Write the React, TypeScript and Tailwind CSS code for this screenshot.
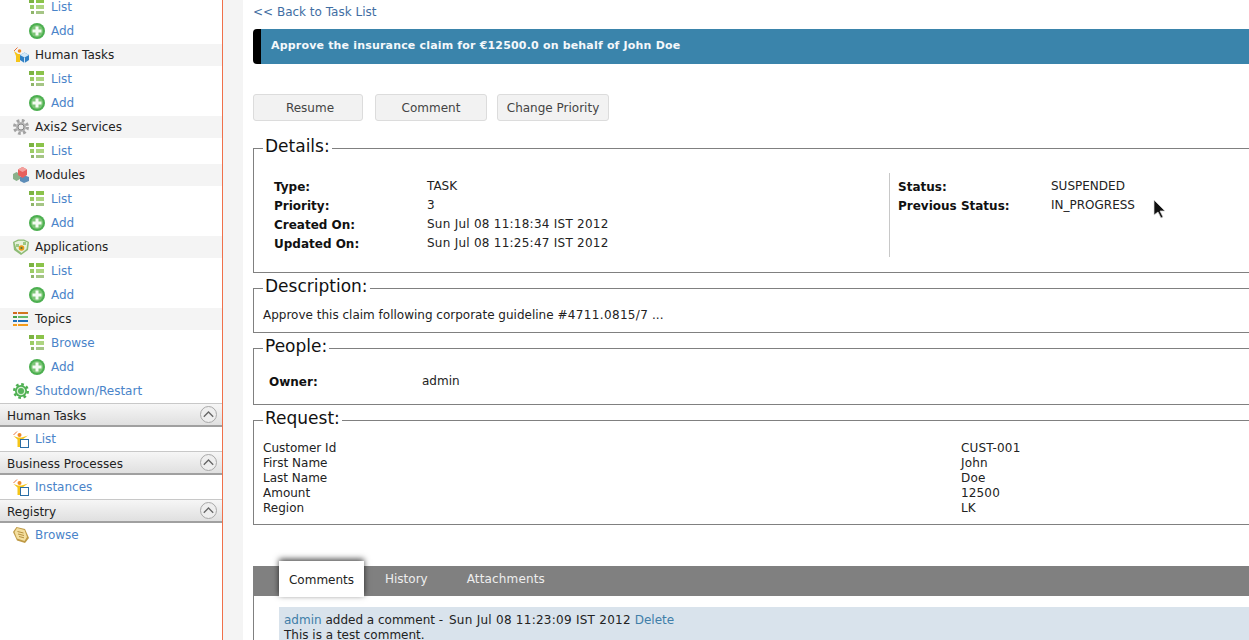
import type { ReactNode } from "react";

const font = { fontFamily: '"DejaVu Sans", sans-serif' };

function ListIcon() {
  return (
    <svg width="16" height="16" viewBox="0 0 16 16" className="shrink-0">
      <rect x="0" y="0" width="5" height="4" fill="#7cb342" />
      <rect x="7" y="0" width="8" height="4" fill="#8bc34a" />
      <rect x="1" y="6" width="4" height="4" fill="#9ccc65" />
      <rect x="7" y="6" width="8" height="4" fill="#aed581" />
      <rect x="2" y="12" width="3" height="3" fill="#8fb56a" />
      <rect x="7" y="12" width="8" height="3" fill="#a5c585" />
    </svg>
  );
}

function AddIcon() {
  return (
    <svg width="16" height="16" viewBox="0 0 16 16" className="shrink-0">
      <circle cx="8" cy="8" r="8" fill="#4caf50" />
      <circle cx="8" cy="8" r="6" fill="#7cc576" />
      <path d="M6.5 3.5h3v3h3v3h-3v3h-3v-3h-3v-3h3z" fill="#f4fbf2" />
    </svg>
  );
}

function HumanTaskIcon() {
  return (
    <svg width="16" height="16" viewBox="0 0 16 16" className="shrink-0">
      <path d="M1 4 4.500 0.500" stroke="#e8743b" fill="none" />
      <path d="M1 4l4 3 2 0v8H3V9z" fill="#f5c518" />
      <circle cx="6.500" cy="4" r="1.800" fill="#f08a24" />
      <path d="M7 8l4.500-2.500L16 8v5l-4.500 3L7 13z" fill="#2f7fc4" />
      <path d="M7 8l4.500 2.500L16 8l-4.500-2.500z" fill="#d5e9f8" />
      <path d="M11.500 10.500V16" stroke="#cfe4f5" />
    </svg>
  );
}

function GearIcon() {
  return (
    <svg width="16" height="16" viewBox="0 0 16 16" className="shrink-0">
      <circle cx="8" cy="8" r="6.300" fill="none" stroke="#a2a2a2" strokeWidth="3.400" strokeDasharray="2.600 2.350" />
      <circle cx="8" cy="8" r="5" fill="#b5b5b5" />
      <circle cx="8" cy="8" r="3" fill="#ececec" stroke="#858585" />
    </svg>
  );
}

function ModulesIcon() {
  return (
    <svg width="16" height="16" viewBox="0 0 16 16" className="shrink-0">
      <path d="M0 7l3.500-2L7 7v5l-3.500 2L0 12z" fill="#8ab08a" />
      <path d="M7 10l3.500-2 5.500 2v4l-5 2-4-2z" fill="#5d8db8" />
      <path d="M5 2.500 9.500 0 14 2.500V8l-4.500 3L5 8z" fill="#e8605c" />
      <path d="M5 2.500 9.500 5 14 2.500 9.500 0z" fill="#f3a19e" />
    </svg>
  );
}

function AppIcon() {
  return (
    <svg width="16" height="16" viewBox="0 0 16 16" className="shrink-0">
      <path d="M0 3l5-2.500h6L16 3l-1 8-7 5-7-5z" fill="#8dbb74" />
      <path d="M1.500 3.500l4-1.800 5 0 4 1.800-1 6.500-5 4-5-4z" fill="#e6f1dc" />
      <path d="M3 5h3v3H3zM10 3h3v3h-3z" fill="#9cc883" />
      <circle cx="8.500" cy="9" r="2.800" fill="#e69a1e" />
      <circle cx="8.500" cy="9" r="1.100" fill="#4f7a36" />
    </svg>
  );
}

function TopicsIcon() {
  return (
    <svg width="16" height="16" viewBox="0 0 16 16" className="shrink-0">
      <rect x="0" y="1" width="4" height="2" fill="#d2691e" />
      <rect x="5" y="1" width="10" height="2" fill="#d2761e" />
      <rect x="0" y="5" width="4" height="2" fill="#43a047" />
      <rect x="5" y="5" width="10" height="2" fill="#66bb6a" />
      <rect x="0" y="9" width="4" height="2" fill="#1e6fb8" />
      <rect x="5" y="9" width="10" height="2" fill="#1e6fb8" />
      <rect x="0" y="13" width="4" height="2" fill="#f59c1a" />
      <rect x="5" y="13" width="10" height="2" fill="#f59c1a" />
    </svg>
  );
}

function ShutdownIcon() {
  return (
    <svg width="16" height="16" viewBox="0 0 16 16" className="shrink-0">
      <circle cx="8" cy="8" r="6.800" fill="none" stroke="#4caf50" strokeWidth="2.400" strokeDasharray="2.670 2.670" />
      <circle cx="8" cy="8" r="6" fill="#4caf50" />
      <circle cx="8" cy="8" r="4.300" fill="#d7efd3" />
      <circle cx="8" cy="8" r="3" fill="#56b45a" />
    </svg>
  );
}

function InstanceIcon() {
  return (
    <svg width="16" height="17" viewBox="0 0 16 17" className="shrink-0">
      <path d="M0.500 4 4 0.500" stroke="#e8743b" fill="none" />
      <path d="M0.500 5 4.500 8.500V16H8V9.500L15 4.500 8.500 6.500H5z" fill="#f5c518" />
      <circle cx="6.500" cy="4" r="2" fill="#f08a24" />
      <rect x="7.500" y="8.500" width="8" height="8" fill="#fff" stroke="#2a6ea6" />
    </svg>
  );
}

function BrowseIcon() {
  return (
    <svg width="16" height="16" viewBox="0 0 16 16" className="shrink-0">
      <path d="M3.500 0 12 2l4 9-4 5-8-2.500L0 5z" fill="#bf9a45" />
      <path d="M4 1l7.500 2 2.500 7-2.500 4L4 11.500 1.500 5z" fill="#f4df9f" />
      <path d="M4.500 4.500l6 1.500M5 7l6 1.500M6 9.500l5 1.300" stroke="#b79140" />
    </svg>
  );
}

function Chevron() {
  return (
    <svg width="17" height="17" viewBox="0 0 17 17" className="shrink-0">
      <circle cx="8.500" cy="8.500" r="8" fill="#eeeeee" stroke="#a8a8a8" />
      <path d="M3.800 10.800 8.500 6l4.700 4.800" fill="none" stroke="#666" strokeWidth="1.300" />
    </svg>
  );
}

function SubLink({ icon, label }: { icon: ReactNode; label: string }) {
  return (
    <div className="flex h-6 items-center gap-[6px] pl-[29px] text-[#4a84c9]">
      {icon}
      <span>{label}</span>
    </div>
  );
}

function Group({ icon, label }: { icon: ReactNode; label: string }) {
  return (
    <div className="my-px flex h-[22px] items-center gap-[6px] bg-[#f4f4f4] pl-[13px] text-[#222]">
      {icon}
      <span>{label}</span>
    </div>
  );
}

function SectionHead({ label }: { label: string }) {
  return (
    <div className="flex h-6 items-center justify-between border-t border-b-2 border-t-[#c8c8c8] border-b-[#a0a0a0] bg-gradient-to-b from-[#f6f6f6] to-[#e0e0e0] pr-[5px] pl-[7px] text-[#222]">
      <span className="pt-[2px]">{label}</span>
      <Chevron />
    </div>
  );
}

function TopLink({ icon, label }: { icon: ReactNode; label: string }) {
  return (
    <div className="flex h-6 items-center gap-[6px] pl-[13px] text-[#4a84c9]">
      {icon}
      <span>{label}</span>
    </div>
  );
}

function Sidebar() {
  return (
    <div className="-mt-[5px] w-[223px] shrink-0 border-r border-[#f0704a] bg-white">
      <SubLink icon={<ListIcon />} label="List" />
      <SubLink icon={<AddIcon />} label="Add" />
      <Group icon={<HumanTaskIcon />} label="Human Tasks" />
      <SubLink icon={<ListIcon />} label="List" />
      <SubLink icon={<AddIcon />} label="Add" />
      <Group icon={<GearIcon />} label="Axis2 Services" />
      <SubLink icon={<ListIcon />} label="List" />
      <Group icon={<ModulesIcon />} label="Modules" />
      <SubLink icon={<ListIcon />} label="List" />
      <SubLink icon={<AddIcon />} label="Add" />
      <Group icon={<AppIcon />} label="Applications" />
      <SubLink icon={<ListIcon />} label="List" />
      <SubLink icon={<AddIcon />} label="Add" />
      <Group icon={<TopicsIcon />} label="Topics" />
      <SubLink icon={<ListIcon />} label="Browse" />
      <SubLink icon={<AddIcon />} label="Add" />
      <TopLink icon={<ShutdownIcon />} label="Shutdown/Restart" />
      <SectionHead label="Human Tasks" />
      <TopLink icon={<InstanceIcon />} label="List" />
      <SectionHead label="Business Processes" />
      <TopLink icon={<InstanceIcon />} label="Instances" />
      <SectionHead label="Registry" />
      <TopLink icon={<BrowseIcon />} label="Browse" />
    </div>
  );
}

function Box({ title, className, children }: { title: string; className: string; children: ReactNode }) {
  return (
    <fieldset className={`min-w-0 border border-[#808080] ${className}`}>
      <legend className="ml-[9px] px-[2px] pb-[4px] text-[17px] leading-[18px] text-[#111]">{title}</legend>
      {children}
    </fieldset>
  );
}

function Field({ label, value, date }: { label: string; value: string; date?: boolean }) {
  return (
    <div className="flex h-[19px] items-center">
      <span className="w-[153px] font-bold text-[#111]">{label}</span>
      <span className={date ? "pb-[2px] tracking-[0.25px] text-[#222]" : "pb-[2px] text-[#222]"}>{value}</span>
    </div>
  );
}

const requestRows = [
  ["Customer Id", "CUST-001"],
  ["First Name", "John"],
  ["Last Name", "Doe"],
  ["Amount", "12500"],
  ["Region", "LK"],
];

function Main() {
  return (
    <div className="relative w-[1100px] shrink-0 bg-white pl-[10px]">
      <div className="pt-[6px] leading-[13px] text-[#3f6ea3]">&lt;&lt; Back to Task List</div>

      <div className="mt-[10px] flex h-[35px] items-center rounded-l border-l-[8px] border-black bg-[#3a84ab] pl-[10px] text-[11px] font-bold tracking-[0.18px] text-[#f4f8fb]">
        Approve the insurance claim for €12500.0 on behalf of John Doe
      </div>

      <div className="mt-[30px] flex text-[#444]">
        <button className="mr-3 h-[27px] w-[110px] rounded-[3px] border border-[#dcdcdc] bg-[#f2f2f2] pl-[4px]">Resume</button>
        <button className="mr-[10px] h-[27px] w-[112px] rounded-[3px] border border-[#dcdcdc] bg-[#f2f2f2]">Comment</button>
        <button className="h-[27px] w-[112px] rounded-[3px] border border-[#dcdcdc] bg-[#f2f2f2]">Change Priority</button>
      </div>

      <Box title="Details:" className="mt-4 h-[136px]">
        <div className="flex pt-[18px] pl-5">
          <div className="w-[615px]">
            <Field label="Type:" value="TASK" />
            <Field label="Priority:" value="3" />
            <Field label="Created On:" value="Sun Jul 08 11:18:34 IST 2012" date />
            <Field label="Updated On:" value="Sun Jul 08 11:25:47 IST 2012" date />
          </div>
          <div className="-mt-1 h-[84px] border-l border-[#c8c8c8] pt-1 pl-2">
            <Field label="Status:" value="SUSPENDED" />
            <Field label="Previous Status:" value="IN_PROGRESS" />
          </div>
        </div>
      </Box>

      <Box title="Description:" className="mt-1 h-[56px]">
        <div className="pt-[9px] pl-[9px] leading-[15px] text-[#222]">
          Approve this claim following corporate guideline <span className="tracking-[0.35px]">#4711.0815/7</span> ...
        </div>
      </Box>

      <Box title="People:" className="mt-1 h-[68px]">
        <div className="pt-[13px] pl-[15px]">
          <Field label="Owner:" value="admin" />
        </div>
      </Box>

      <Box title="Request:" className="mt-1 h-[116px]">
        <div className="pt-[9px] pl-[9px] text-[#222]">
          {requestRows.map(([k, v]) => (
            <div key={k} className="flex h-[15px] items-center">
              <span className="w-[698px]">{k}</span>
              <span className="tracking-[0.15px]">{v}</span>
            </div>
          ))}
        </div>
      </Box>

      <div className="mt-[41px] flex h-[30px] items-start bg-[#808080] pl-[26px]">
        <div className="relative z-10 -mt-[5px] flex h-[36px] w-[85px] items-center justify-center bg-white pt-[2px] text-[#222] shadow-[0_-2px_6px_rgba(0,0,0,0.7)]">
          Comments
        </div>
        <div className="ml-[21px] flex h-[26px] items-center text-[#eeeeee]">History</div>
        <div className="ml-[39px] flex h-[26px] items-center tracking-[0.15px] text-[#eeeeee]">Attachments</div>
      </div>

      <div className="border-l border-[#808080] pt-[11px] pl-[25px]">
        <div className="bg-[#d9e3ec] px-[5px] pt-[6px] pb-10 leading-[14px] text-[#222]">
          <div>
            <span className="text-[#3f7ea8]">admin</span> added a comment -{" "}
            <span className="pl-[2px] tracking-[0.26px]">Sun Jul 08 11:23:09 IST 2012</span>{" "}
            <span className="text-[#3f7ea8]">Delete</span>
          </div>
          <div className="pt-px">This is a test comment.</div>
        </div>
      </div>

      <svg width="14" height="20" viewBox="0 0 14 20" className="absolute top-[199px] left-[910px]">
        <path d="M1 1v15l4-3 3 6 2-1-3-6h5z" fill="#111" stroke="#ddd" strokeWidth="0.700" />
      </svg>
    </div>
  );
}

export default function App() {
  return (
    <div className="flex h-[640px] w-[1249px] overflow-hidden bg-white text-xs" style={font}>
      <Sidebar />
      <div className="w-5 shrink-0 bg-[#f4f4f4]" />
      <Main />
    </div>
  );
}
